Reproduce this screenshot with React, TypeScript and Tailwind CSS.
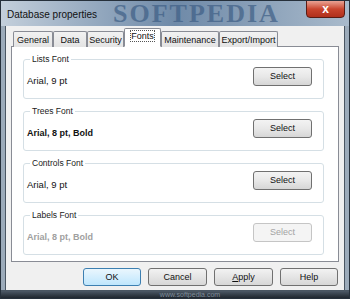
import React, { useState } from "react";

const tabs = ["General", "Data", "Security", "Fonts", "Maintenance", "Export/Import"];

const groups = [
  { title: "Lists Font", sample: "Arial, 9 pt", bold: false, disabled: false },
  { title: "Trees Font", sample: "Arial, 8 pt, Bold", bold: true, disabled: false },
  { title: "Controls Font", sample: "Arial, 9 pt", bold: false, disabled: false },
  { title: "Labels Font", sample: "Arial, 8 pt, Bold", bold: true, disabled: true },
];

const tabWidths: Record<string, string> = {
  General: "w-[40px]",
  Data: "w-[34px]",
  Security: "w-[37px]",
  Fonts: "w-[37px]",
  Maintenance: "w-[58px]",
  "Export/Import": "w-[59px]",
};

const FontGroup: React.FC<{
  title: string;
  sample: string;
  bold: boolean;
  disabled: boolean;
}> = ({ title, sample, bold, disabled }) => (
  <div className="relative h-[40px] rounded-[3px] border border-[#d5dfe5] flex items-center justify-between pl-[3px] pr-[11px]">
    {/* legend sits on the top border */}
    <span className="absolute left-[6px] top-[-7px] bg-white px-[2px] text-[8.5px] leading-[12px] text-[#1a1a1a]">
      {title}
    </span>
    <span
      className={`mt-[3px] leading-[12px] ${bold ? "font-bold text-[9px]" : "text-[9.5px]"} ${
        disabled ? "text-[#a0a0a0]" : "text-[#111]"
      }`}
    >
      {sample}
    </span>
    <button
      disabled={disabled}
      className={`mb-[5px] w-[59px] h-[19px] rounded-[3px] border text-[9px] leading-none ${
        disabled
          ? "border-[#c5c5c5] bg-[#f4f4f4] text-[#a3a3a3]"
          : "border-[#707070] bg-gradient-to-b from-[#f3f3f3] via-[#e8e8e8] to-[#d6d6d6] text-[#111]"
      }`}
    >
      Select
    </button>
  </div>
);

const App: React.FC = () => {
  const [activeTab, setActiveTab] = useState("Fonts");

  return (
    <div
      className="w-[350px] h-[299px] flex flex-col bg-[#8b9bad] border border-[#26303b] overflow-hidden"
      style={{ fontFamily: '"Liberation Sans", Arial, sans-serif' }}
    >
      {/* title bar */}
      <div className="relative h-[25px] shrink-0 bg-gradient-to-r from-[#c3cfdb] via-[#6f8aa8] to-[#a9bacb] flex items-center pl-[6px]">
        <span
          className="absolute left-[112px] top-0 text-[26px] leading-[25px] font-bold tracking-[2px] text-[#3f5f86] opacity-70 select-none"
          style={{ fontFamily: '"Liberation Serif", serif' }}
        >
          SOFTPEDIA
        </span>
        <span className="relative text-[10px] text-[#111] mt-[1px]">Database properties</span>
        <div className="absolute right-[4px] top-[-1px] w-[39px] h-[18px] rounded-b-[4px] border border-[#5a1c14] bg-gradient-to-b from-[#e8a294] via-[#c9452e] to-[#b0301c] flex items-center justify-center">
          <span className="text-white text-[12px] font-bold leading-none">x</span>
        </div>
      </div>

      {/* middle: side frames + client */}
      <div className="flex flex-1 min-h-0">
        <div className="w-[5px] shrink-0 bg-[#9cabba] border-r border-[#4a5662]" />
        <div className="flex-1 bg-[#f0f0f0] flex flex-col px-[5px] pt-[2px]">
          {/* tabs */}
          <div className="flex items-end h-[19px] pl-[2px] relative z-10">
            {tabs.map((t) => {
              const active = t === activeTab;
              return (
                <button
                  key={t}
                  onClick={() => setActiveTab(t)}
                  className={`${tabWidths[t]} ${
                    active
                      ? "h-[19px] bg-white border-[#898c95] border-b-white pb-[3px]"
                      : "h-[16px] bg-gradient-to-b from-[#f2f2f2] to-[#e3e3e3] border-[#898c95] border-b-0"
                  } border rounded-t-[2px] text-[9px] leading-[10px] text-[#111] flex items-center justify-center`}
                >
                  {active ? (
                    <span className="outline outline-1 outline-dotted outline-[#555]">{t}</span>
                  ) : (
                    t
                  )}
                </button>
              );
            })}
          </div>

          {/* tab page */}
          <div className="h-[216px] -mt-px bg-white border border-[#898c95] pt-[12px] pl-[11px] pr-[14px] flex flex-col gap-[12px]">
            {groups.map((g) => (
              <FontGroup key={g.title} {...g} />
            ))}
          </div>

          {/* dialog buttons */}
          <div className="flex justify-end gap-[7px] mt-[6px] pr-[1px]">
            <button className="w-[58px] h-[18px] rounded-[3px] border border-[#3c7fb1] bg-gradient-to-b from-[#eaf6fd] to-[#bee6fd] text-[9px] leading-none text-[#111]">
              OK
            </button>
            <button className="w-[59px] h-[18px] rounded-[3px] border border-[#707070] bg-gradient-to-b from-[#f2f2f2] to-[#d7d7d7] text-[9px] leading-none text-[#111]">
              Cancel
            </button>
            <button className="w-[59px] h-[18px] rounded-[3px] border border-[#707070] bg-gradient-to-b from-[#f2f2f2] to-[#d7d7d7] text-[9px] leading-none text-[#111]">
              <span className="underline">A</span>pply
            </button>
            <button className="w-[58px] h-[18px] rounded-[3px] border border-[#707070] bg-gradient-to-b from-[#f2f2f2] to-[#d7d7d7] text-[9px] leading-none text-[#111]">
              Help
            </button>
          </div>
        </div>
        <div className="w-[5px] shrink-0 bg-[#9cabba] border-l border-[#4a5662]" />
      </div>

      {/* bottom frame */}
      <div className="h-[8px] shrink-0 bg-gradient-to-b from-[#4d5966] to-[#20272f] border-t border-[#4a5662] flex justify-center">
        <span className="text-[7px] leading-[7px] text-[#7f8c99] ml-[30px]">www.softpedia.com</span>
      </div>
    </div>
  );
};

export default App;
